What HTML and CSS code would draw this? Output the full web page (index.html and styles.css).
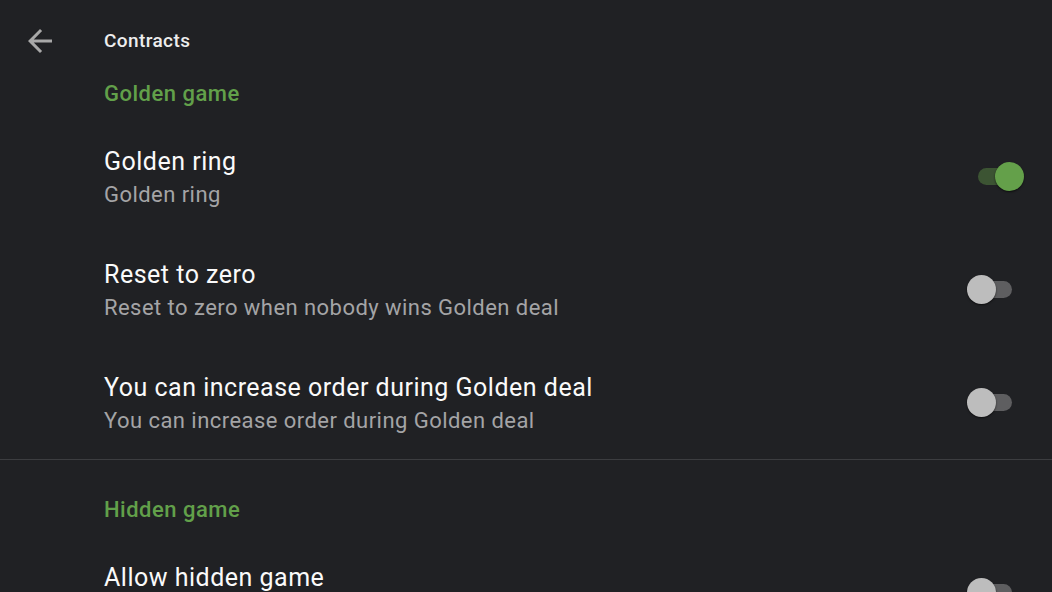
FILE: index.html
```html
<!DOCTYPE html>
<html>
<head>
<meta charset="utf-8">
<link rel="stylesheet" href="styles.css">
</head>
<body>
<div class="screen">
  <header class="toolbar">
    <div class="nav">
      <svg class="back" viewBox="0 0 24 24" width="36" height="36"><path d="M20 11H7.83l5.59-5.59L12 4l-8 8 8 8 1.41-1.41L7.83 13H20v-2z" fill="currentColor"/></svg>
    </div>
    <h1 class="title">Contracts</h1>
  </header>

  <section class="section">
    <div class="category category-first">Golden game</div>
    <div class="pref">
      <div class="pref-text">
        <div class="pref-title">Golden ring</div>
        <div class="pref-summary">Golden ring</div>
      </div>
      <div class="switch on"><span class="track"></span><span class="thumb"></span></div>
    </div>
    <div class="pref">
      <div class="pref-text">
        <div class="pref-title">Reset to zero</div>
        <div class="pref-summary">Reset to zero when nobody wins Golden deal</div>
      </div>
      <div class="switch"><span class="track"></span><span class="thumb"></span></div>
    </div>
    <div class="pref">
      <div class="pref-text">
        <div class="pref-title">You can increase order during Golden deal</div>
        <div class="pref-summary">You can increase order during Golden deal</div>
      </div>
      <div class="switch"><span class="track"></span><span class="thumb"></span></div>
    </div>
  </section>

  <section class="section divided">
    <div class="category">Hidden game</div>
    <div class="pref">
      <div class="pref-text">
        <div class="pref-title">Allow hidden game</div>
        <div class="pref-summary">Allow hidden game</div>
      </div>
      <div class="switch"><span class="track"></span><span class="thumb"></span></div>
    </div>
  </section>
</div>
</body>
</html>
```

FILE: styles.css
```css
html, body {
  margin: 0;
  padding: 0;
  background: #202124;
  overflow: hidden;
}

.screen {
  width: 1052px;
  height: 592px;
  overflow: hidden;
  font-family: Roboto, "Noto Sans", sans-serif;
  color: #f5f5f5;
}

.toolbar {
  height: 82px;
  display: flex;
  align-items: center;
}

.nav {
  width: 104px;
  display: flex;
  padding-left: 22px;
  box-sizing: border-box;
  color: #a8a8a8;
}

.back {
  display: block;
}

.title {
  margin: 0;
  font-size: 19px;
  font-weight: 500;
  line-height: 24px;
  letter-spacing: 0.4px;
  color: #ededed;
}

.divided {
  border-top: 1px solid #3c3d40;
}

.category {
  padding: 38px 0 14px 104px;
  font-size: 22px;
  line-height: 24px;
  font-weight: 500;
  letter-spacing: 0.5px;
  color: #62a04a;
}

.category-first {
  padding-top: 0;
}

.pref {
  height: 113px;
  display: flex;
  align-items: center;
  padding: 0 37px 0 104px;
  box-sizing: border-box;
}

.pref-text {
  flex: 1;
  align-self: flex-start;
  padding-top: 28px;
}

.pref-title {
  font-size: 25px;
  line-height: 28px;
  letter-spacing: 0.5px;
  color: #fafafa;
}

.pref-summary {
  margin-top: 6px;
  font-size: 22px;
  line-height: 26px;
  letter-spacing: 0.45px;
  color: #a4a4a6;
}

.switch {
  position: relative;
  width: 48px;
  height: 30px;
}

.track {
  position: absolute;
  left: 11px;
  top: 6px;
  width: 34px;
  height: 17px;
  border-radius: 9px;
  background: #5e5e60;
}

.thumb {
  position: absolute;
  left: 0;
  top: 0;
  width: 29px;
  height: 29px;
  border-radius: 50%;
  background: #bdbdbd;
  box-shadow: 0 1px 2px rgba(0, 0, 0, 0.6);
}

.switch.on .track {
  background: #3c5433;
  left: 11px;
}

.switch.on .thumb {
  left: 28px;
  background: #64a04a;
}
```
